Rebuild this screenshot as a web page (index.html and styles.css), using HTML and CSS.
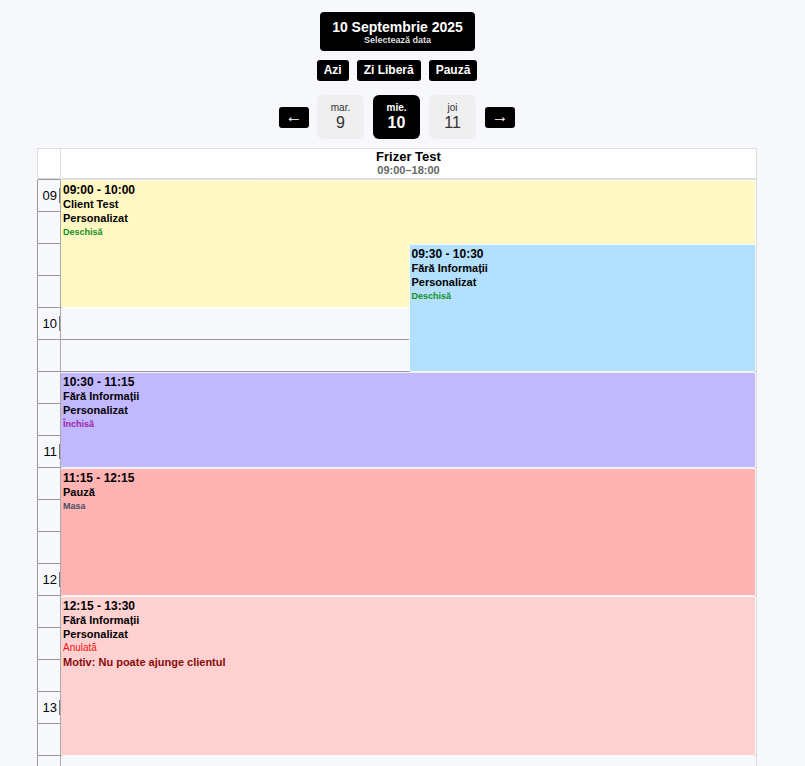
FILE: index.html
```html
<!DOCTYPE html>
<html lang="ro">
<head>
<meta charset="utf-8">
<title>Calendar</title>
<link rel="stylesheet" href="styles.css">
</head>
<body>
<div class="page">
  <div class="toolbar">
    <button class="date-btn">
      <span class="date-title">10 Septembrie 2025</span>
      <span class="date-sub">Selectează data</span>
    </button>
    <div class="actions">
      <button class="act">Azi</button>
      <button class="act">Zi Liberă</button>
      <button class="act">Pauză</button>
    </div>
    <div class="days">
      <button class="arrow">←</button>
      <div class="day"><span class="dname">mar.</span><span class="dnum">9</span></div>
      <div class="day active"><span class="dname">mie.</span><span class="dnum">10</span></div>
      <div class="day"><span class="dname">joi</span><span class="dnum">11</span></div>
      <button class="arrow">→</button>
    </div>
  </div>

  <div class="cal">
    <div class="cal-head">
      <div class="corner"></div>
      <div class="staff">
        <span class="staff-name">Frizer Test</span>
        <span class="staff-hours">09:00–18:00</span>
      </div>
    </div>
    <div class="cal-body">
      <div class="times">
        <div class="tslot"><span class="hl">09</span></div>
        <div class="tslot"></div>
        <div class="tslot"></div>
        <div class="tslot"></div>
        <div class="tslot"><span class="hl">10</span></div>
        <div class="tslot"></div>
        <div class="tslot"></div>
        <div class="tslot"></div>
        <div class="tslot"><span class="hl">11</span></div>
        <div class="tslot"></div>
        <div class="tslot"></div>
        <div class="tslot"></div>
        <div class="tslot"><span class="hl">12</span></div>
        <div class="tslot"></div>
        <div class="tslot"></div>
        <div class="tslot"></div>
        <div class="tslot"><span class="hl">13</span></div>
        <div class="tslot"></div>
        <div class="tslot"></div>
      </div>
      <div class="col">
        <div class="slot"></div><div class="slot"></div><div class="slot"></div><div class="slot"></div>
        <div class="slot"></div><div class="slot"></div><div class="slot"></div><div class="slot"></div>
        <div class="slot"></div><div class="slot"></div><div class="slot"></div><div class="slot"></div>
        <div class="slot"></div><div class="slot"></div><div class="slot"></div><div class="slot"></div>
        <div class="slot"></div><div class="slot"></div><div class="slot"></div>

        <div class="ev full ev-yellow" style="top:0;height:128px;left:0;right:0">
          <div class="ev-time">09:00 - 10:00</div>
          <div class="ev-line">Client Test</div>
          <div class="ev-line">Personalizat</div>
          <div class="ev-status st-open">Deschisă</div>
        </div>
        <div class="ev ev-blue" style="top:64px;height:128px;left:50%;right:0">
          <div class="ev-time">09:30 - 10:30</div>
          <div class="ev-line">Fără Informații</div>
          <div class="ev-line">Personalizat</div>
          <div class="ev-status st-open">Deschisă</div>
        </div>
        <div class="ev full ev-purple" style="top:192px;height:96px;left:0;right:0">
          <div class="ev-time">10:30 - 11:15</div>
          <div class="ev-line">Fără Informații</div>
          <div class="ev-line">Personalizat</div>
          <div class="ev-status st-closed">Închisă</div>
        </div>
        <div class="ev full ev-red" style="top:288px;height:128px;left:0;right:0">
          <div class="ev-time">11:15 - 12:15</div>
          <div class="ev-line">Pauză</div>
          <div class="ev-status st-note">Masa</div>
        </div>
        <div class="ev full ev-pink" style="top:416px;height:160px;left:0;right:0">
          <div class="ev-time">12:15 - 13:30</div>
          <div class="ev-line">Fără Informații</div>
          <div class="ev-line">Personalizat</div>
          <div class="ev-status st-cancel">Anulată</div>
          <div class="ev-reason">Motiv: Nu poate ajunge clientul</div>
        </div>
      </div>
    </div>
  </div>
</div>
</body>
</html>
```

FILE: styles.css
```css
* { box-sizing: border-box; }
html, body { margin: 0; padding: 0; }
body {
  background: #f7f8fc;
  font-family: "Liberation Sans", Arial, sans-serif;
  color: #000;
  overflow: hidden;
  height: 766px;
}
.page {
  width: 720px;
  margin-left: 37px;
  padding-top: 12px;
}
.toolbar {
  display: flex;
  flex-direction: column;
  align-items: center;
}
button {
  font-family: inherit;
  border: none;
  cursor: pointer;
}
.date-btn {
  width: 155px;
  height: 39px;
  background: #000;
  color: #fff;
  border-radius: 4px;
  display: flex;
  flex-direction: column;
  align-items: center;
  justify-content: center;
  padding: 0;
  margin-left: 1px;
}
.date-title {
  font-size: 14px;
  font-weight: bold;
  line-height: 16px;
  margin-top: 1px;
}
.date-sub {
  font-size: 9px;
  font-weight: bold;
  color: #ddd;
  line-height: 11px;
}
.actions {
  display: flex;
  gap: 8px;
  margin-top: 9px;
}
.act {
  background: #000;
  color: #fff;
  font-size: 12px;
  font-weight: bold;
  height: 21px;
  padding: 0 7px;
  border-radius: 3px;
  line-height: 21px;
}
.days {
  display: flex;
  align-items: center;
  gap: 9px;
  margin-top: 14px;
}
.arrow {
  width: 30px;
  height: 21px;
  background: #000;
  color: #fff;
  font-size: 17px;
  border-radius: 3px;
  padding: 0;
  line-height: 20px;
}
.arrow:first-child { margin-right: -1px; }
.day {
  width: 47px;
  height: 44px;
  border-radius: 6px;
  background: #efefef;
  color: #333;
  display: flex;
  flex-direction: column;
  align-items: center;
  justify-content: center;
}
.day.active {
  background: #000;
  color: #fff;
  font-weight: bold;
}
.dname {
  font-size: 10px;
  line-height: 12px;
}
.dnum {
  font-size: 16px;
  line-height: 18px;
}

.cal {
  margin-top: 9px;
  width: 720px;
}
.cal-head {
  display: flex;
  height: 32px;
  border: 1px solid #ddd;
  border-bottom: 2px solid #ddd;
  background: #fff;
}
.corner {
  width: 23px;
  border-right: 1px solid #ddd;
}
.staff {
  flex: 1;
  display: flex;
  flex-direction: column;
  align-items: center;
}
.staff-name {
  font-size: 13px;
  font-weight: bold;
  line-height: 15px;
}
.staff-hours {
  font-size: 11px;
  font-weight: bold;
  color: #666;
  line-height: 13px;
}
.cal-body {
  display: flex;
}
.times {
  width: 24px;
  border-left: 1px solid #999;
  border-right: 1px solid #aaa;
}
.tslot {
  height: 32px;
  border-bottom: 1px solid #999;
  display: flex;
  align-items: center;
  justify-content: flex-end;
}
.tslot:first-child { border-top: 1px solid #999; height: 33px; margin-top: -1px; }
.hl {
  font-size: 13px;
  line-height: 15px;
  padding-right: 2px;
  border-right: 1px solid #777;
}
.col {
  flex: 1;
  position: relative;
  border-right: 1px solid #ddd;
}
.slot {
  height: 32px;
  border-bottom: 1px solid #999;
}
.ev {
  position: absolute;
  border: 1px solid rgba(255, 255, 255, 0.8);
  border-radius: 2px;
  padding: 2px 1px 0 2px;
  overflow: hidden;
}
.ev.full {
  border-left: none;
  padding-left: 2px;
}
.ev-yellow { background: #fff8c2; }
.ev-blue { background: #b3e0fe; }
.ev-purple { background: #c2b8ff; }
.ev-red { background: #ffb3b3; }
.ev-pink { background: #ffd1d1; }
.ev-time {
  font-size: 12px;
  font-weight: bold;
  line-height: 14px;
}
.ev-line {
  font-size: 11px;
  font-weight: bold;
  line-height: 14px;
}
.ev-status {
  font-size: 9px;
  font-weight: bold;
  line-height: 14px;
}
.st-open { color: #12901e; }
.st-closed { color: #9a1fa6; }
.st-note { color: #4a5068; }
.st-cancel { color: #ff1010; font-weight: normal; font-size: 10px; }
.ev-reason {
  font-size: 11px;
  font-weight: bold;
  line-height: 14px;
  color: #8b0a0a;
}
```
